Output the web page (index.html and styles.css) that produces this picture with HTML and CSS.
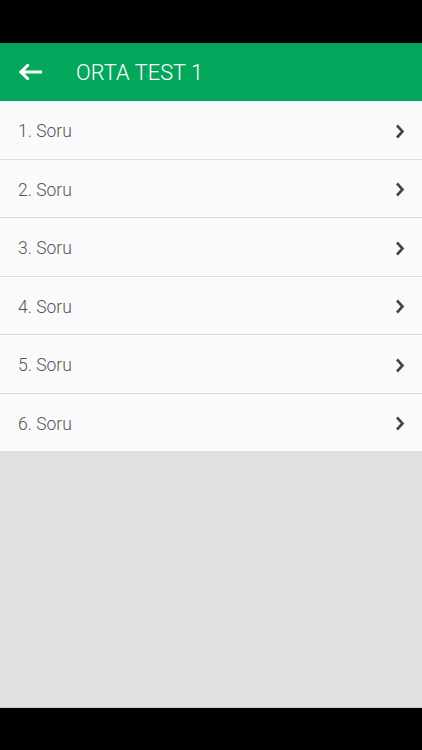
FILE: index.html
```html
<!DOCTYPE html>
<html lang="tr">
<head>
<meta charset="utf-8">
<title>ORTA TEST 1</title>
<link rel="stylesheet" href="styles.css">
</head>
<body>
<div class="screen">
  <div class="statusbar"></div>
  <header class="appbar">
    <svg class="back" width="24" height="16" viewBox="0 0 24 16" aria-hidden="true">
      <path d="M23 8H3M9.5 1.5L3 8l6.5 6.5" fill="none" stroke="#fff" stroke-width="3" stroke-linecap="square"/>
    </svg>
    <h1 class="title">ORTA TEST 1</h1>
  </header>
  <main class="content">
    <ul class="list">
      <li class="row"><span class="label">1. Soru</span><svg class="chev" width="10" height="15" viewBox="0 0 10 15"><path d="M2 1.5l5.5 6L2 13.5" fill="none" stroke="#444" stroke-width="2.6"/></svg></li>
      <li class="row"><span class="label">2. Soru</span><svg class="chev" width="10" height="15" viewBox="0 0 10 15"><path d="M2 1.5l5.5 6L2 13.5" fill="none" stroke="#444" stroke-width="2.6"/></svg></li>
      <li class="row"><span class="label">3. Soru</span><svg class="chev" width="10" height="15" viewBox="0 0 10 15"><path d="M2 1.5l5.5 6L2 13.5" fill="none" stroke="#444" stroke-width="2.6"/></svg></li>
      <li class="row"><span class="label">4. Soru</span><svg class="chev" width="10" height="15" viewBox="0 0 10 15"><path d="M2 1.5l5.5 6L2 13.5" fill="none" stroke="#444" stroke-width="2.6"/></svg></li>
      <li class="row"><span class="label">5. Soru</span><svg class="chev" width="10" height="15" viewBox="0 0 10 15"><path d="M2 1.5l5.5 6L2 13.5" fill="none" stroke="#444" stroke-width="2.6"/></svg></li>
      <li class="row"><span class="label">6. Soru</span><svg class="chev" width="10" height="15" viewBox="0 0 10 15"><path d="M2 1.5l5.5 6L2 13.5" fill="none" stroke="#444" stroke-width="2.6"/></svg></li>
    </ul>
  </main>
  <div class="navbar"></div>
</div>
</body>
</html>
```
FILE: styles.css
```css
html, body {
  margin: 0;
  padding: 0;
}
body {
  font-family: Roboto, "Liberation Sans", sans-serif;
  background: #000;
}
.screen {
  width: 422px;
  height: 750px;
  display: flex;
  flex-direction: column;
}
.statusbar {
  height: 43px;
  background: #000;
  flex: none;
}
.appbar {
  height: 58px;
  flex: none;
  background: #03a75c;
  display: flex;
  align-items: center;
  padding-left: 18px;
  box-sizing: border-box;
}
.back {
  display: block;
  flex: none;
}
.title {
  margin: 0 0 0 34px;
  color: #fff;
  font-weight: 300;
  font-size: 21.7px;
  letter-spacing: 0.1px;
}
.content {
  flex: 1;
  background: #e0e0e0;
}
.list {
  list-style: none;
  margin: 0;
  padding: 0;
}
.row {
  height: 58.5px;
  box-sizing: border-box;
  background: #fafafa;
  border-bottom: 1px solid #dcdcdc;
  display: flex;
  align-items: center;
  justify-content: space-between;
  padding: 3px 17px 0 18px;
}
.label {
  font-size: 17.5px;
  font-weight: 300;
  color: #555;
}
.chev {
  display: block;
}
.navbar {
  height: 43px;
  flex: none;
  background: #000;
  border-top: 1px solid #c8c8c8;
  box-sizing: border-box;
}
```
